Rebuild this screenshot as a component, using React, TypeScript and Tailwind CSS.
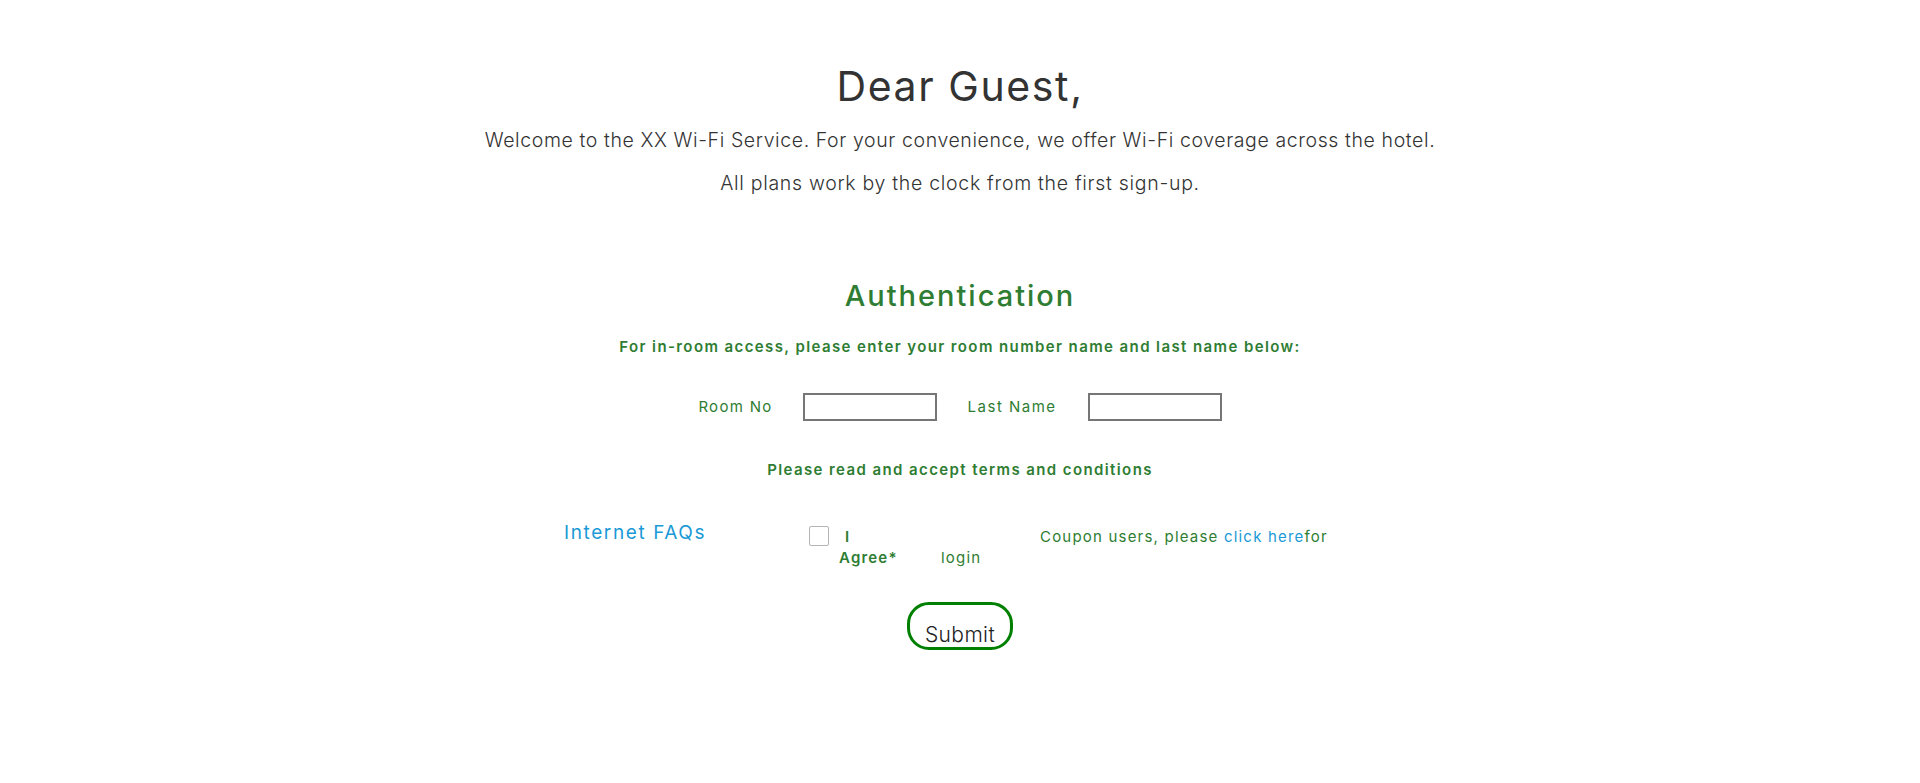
import { useState } from "react";

const green = "text-[#2e7d32]";

export default function App() {
  const [roomNo, setRoomNo] = useState("");
  const [lastName, setLastName] = useState("");
  const [agree, setAgree] = useState(false);

  return (
    <div className="min-h-[783px] w-full bg-white font-['Inter',sans-serif] text-[#333]">
      <div className="flex flex-col items-center pt-[61px]">
        <h1 className="text-[41px] font-normal leading-[50px] tracking-[1.6px]">Dear Guest,</h1>
        <p className="mt-[8px] text-[19.5px] font-light leading-[43px] tracking-[0.6px]">
          Welcome to the XX Wi-Fi Service. For your convenience, we offer Wi-Fi coverage across the hotel.
        </p>
        <p className="text-[19.5px] font-light leading-[43px] tracking-[0.7px]">
          All plans work by the clock from the first sign-up.
        </p>

        <h2 className={`mt-[73px] text-[29px] font-medium leading-[36px] tracking-[2px] ${green}`}>
          Authentication
        </h2>
        <p className={`mt-[23px] text-[15px] font-semibold leading-[20px] tracking-[1.4px] ${green}`}>
          For in-room access, please enter your room number name and last name below:
        </p>

        <div className="mt-[36px] flex items-center">
          <label className={`text-[15px] leading-[20px] tracking-[1.3px] ${green}`}>Room No</label>
          <input
            value={roomNo}
            onChange={(e) => setRoomNo(e.target.value)}
            className="ml-[30px] h-[28px] w-[134px] border-2 border-[#767676] bg-white px-1 text-sm outline-none"
          />
          <label className={`ml-[31px] text-[15px] leading-[20px] tracking-[1.5px] ${green}`}>Last Name</label>
          <input
            value={lastName}
            onChange={(e) => setLastName(e.target.value)}
            className="ml-[31px] h-[28px] w-[134px] border-2 border-[#767676] bg-white px-1 text-sm outline-none"
          />
        </div>

        <p className={`mt-[39px] text-[15px] font-semibold leading-[20px] tracking-[1.4px] ${green}`}>
          Please read and accept terms and conditions
        </p>

        <div className="mt-[46px] flex w-[792px] items-start text-[15px] leading-[21px] tracking-[1.2px]">
          <a href="#" className="-mt-[6px] w-[245px] text-[19px] leading-[26px] tracking-[1.6px] text-[#1a9ad6]">
            Internet FAQs
          </a>
          <div className="flex w-[132px] items-start">
            <button
              type="button"
              onClick={() => setAgree(!agree)}
              className="h-[20px] w-[20px] shrink-0 rounded-[2px] border border-[#b5b5b5] bg-white text-[12px] leading-none text-[#2e7d32]"
            >
              {agree ? "✓" : ""}
            </button>
            <span className={`ml-[10px] font-semibold ${green}`}>
              <span className="pl-[6px]">I</span>
              <br />
              Agree*
            </span>
          </div>
          <span className={`mt-[21px] w-[99px] ${green}`}>login</span>
          <span className={`${green}`}>
            Coupon users, please{" "}
            <a href="#" className="text-[#1a9ad6]">
              click here
            </a>
            for
          </span>
        </div>

        <button
          type="button"
          className="mt-[34px] flex h-[48px] w-[106px] items-end justify-center rounded-[22px] border-[3px] border-[#008000] bg-white text-[21px] font-light leading-[25px] tracking-[0.4px] text-[#222]"
        >
          Submit
        </button>
      </div>
    </div>
  );
}
